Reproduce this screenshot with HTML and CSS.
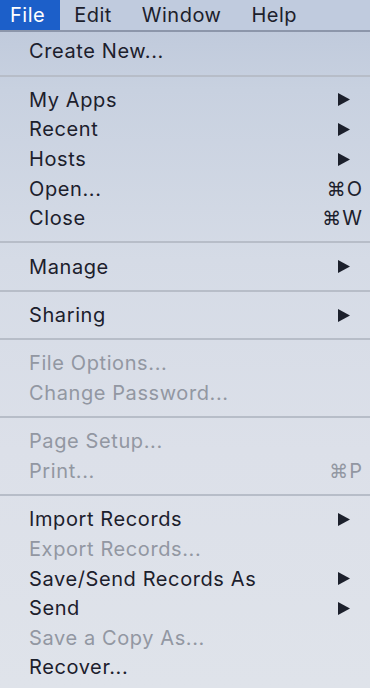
FILE: index.html
```html
<!DOCTYPE html>
<html>
<head>
<meta charset="utf-8">
<link rel="stylesheet" href="styles.css">
</head>
<body>
<div class="screen">
  <div class="menubar">
    <span class="mb-item active">File</span>
    <span class="mb-item">Edit</span>
    <span class="mb-item">Window</span>
    <span class="mb-item">Help</span>
  </div>
  <div class="menu">
    <div class="row"><span class="label">Create New...</span></div>
    <div class="sep"></div>
    <div class="row"><span class="label">My Apps</span><svg class="arrow" viewBox="0 0 12 13"><polygon points="0,0 12,6.5 0,13"/></svg></div>
    <div class="row"><span class="label">Recent</span><svg class="arrow" viewBox="0 0 12 13"><polygon points="0,0 12,6.5 0,13"/></svg></div>
    <div class="row"><span class="label">Hosts</span><svg class="arrow" viewBox="0 0 12 13"><polygon points="0,0 12,6.5 0,13"/></svg></div>
    <div class="row"><span class="label">Open...</span><span class="key"><span class="cmd">⌘</span>O</span></div>
    <div class="row"><span class="label">Close</span><span class="key"><span class="cmd">⌘</span>W</span></div>
    <div class="sep"></div>
    <div class="row"><span class="label">Manage</span><svg class="arrow" viewBox="0 0 12 13"><polygon points="0,0 12,6.5 0,13"/></svg></div>
    <div class="sep"></div>
    <div class="row"><span class="label">Sharing</span><svg class="arrow" viewBox="0 0 12 13"><polygon points="0,0 12,6.5 0,13"/></svg></div>
    <div class="sep"></div>
    <div class="row disabled"><span class="label">File Options...</span></div>
    <div class="row disabled"><span class="label">Change Password...</span></div>
    <div class="sep"></div>
    <div class="row disabled"><span class="label">Page Setup...</span></div>
    <div class="row disabled"><span class="label">Print...</span><span class="key"><span class="cmd">⌘</span>P</span></div>
    <div class="sep"></div>
    <div class="row"><span class="label">Import Records</span><svg class="arrow" viewBox="0 0 12 13"><polygon points="0,0 12,6.5 0,13"/></svg></div>
    <div class="row disabled"><span class="label">Export Records...</span></div>
    <div class="row"><span class="label">Save/Send Records As</span><svg class="arrow" viewBox="0 0 12 13"><polygon points="0,0 12,6.5 0,13"/></svg></div>
    <div class="row"><span class="label">Send</span><svg class="arrow" viewBox="0 0 12 13"><polygon points="0,0 12,6.5 0,13"/></svg></div>
    <div class="row disabled"><span class="label">Save a Copy As...</span></div>
    <div class="row"><span class="label">Recover...</span></div>
  </div>
</div>
</body>
</html>
```
FILE: styles.css
```css
html, body {
  margin: 0;
  padding: 0;
}
body {
  width: 370px;
  height: 688px;
  overflow: hidden;
  font-family: Inter, "Noto Sans", "DejaVu Sans", sans-serif;
  color: #1c202c;
}
.screen {
  width: 370px;
  height: 688px;
  display: flex;
  flex-direction: column;
  background: linear-gradient(180deg, #bcc7da 0px, #c8d1e0 90px, #d5dbe6 260px, #dce0e9 450px, #dfe3ea 688px);
}
.menubar {
  height: 30px;
  display: flex;
  align-items: stretch;
  background: #c0cbde;
  border-bottom: 2px solid #8c96aa;
  flex: none;
}
.mb-item {
  display: flex;
  align-items: center;
  font-size: 20px;
  letter-spacing: 0.5px;
  margin-right: 30px;
}
.mb-item.active {
  background: #1c5fc9;
  color: #ffffff;
  padding: 0 15px 0 10px;
  margin-right: 14px;
}
.menu {
  padding-top: 4.7px;
  display: flex;
  flex-direction: column;
}
.row {
  height: 29.6px;
  display: flex;
  align-items: center;
  padding: 0 8px 0 29px;
  font-size: 20px;
  letter-spacing: 0.6px;
}
.row .label { flex: 1; }
.row.disabled { color: #9297a2; }
.arrow {
  width: 12px;
  height: 13px;
  fill: #1c202c;
  margin-right: 12px;
}
.key {
  font-size: 20px;
  letter-spacing: 0;
}
.cmd {
  font-family: "DejaVu Sans", sans-serif;
  font-size: 19px;
  margin-right: 1px;
}
.sep {
  height: 18.8px;
  display: flex;
  align-items: center;
}
.sep::before {
  content: "";
  display: block;
  width: 100%;
  height: 2px;
  background: #b7bdc8;
}
```
